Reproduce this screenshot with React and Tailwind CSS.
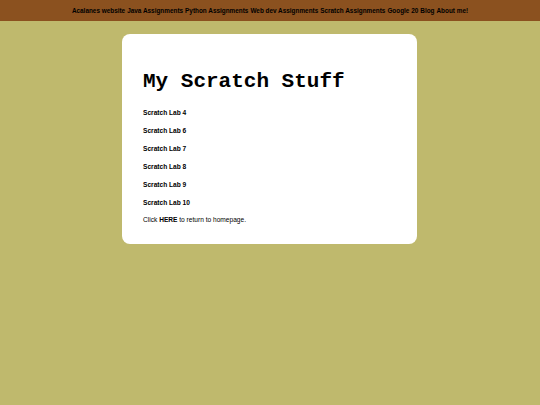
export default function App() {
  const labs = ["Scratch Lab 4", "Scratch Lab 6", "Scratch Lab 7", "Scratch Lab 8", "Scratch Lab 9", "Scratch Lab 10"];
  const nav = ["Acalanes website", "Java Assignments", "Python Assignments", "Web dev Assignments", "Scratch Assignments", "Google 20", "Blog", "About me!"];
  return (
    <div className="w-[540px] h-[405px] bg-[#bfb96d] font-['Liberation_Sans',Arial,sans-serif]">
      <div className="h-[21px] bg-[#8b511f] flex items-center justify-center gap-[2px] text-[6.4px] font-bold text-black">
        {nav.map((n) => (
          <span key={n}>{n}</span>
        ))}
      </div>
      <div className="ml-[122px] mt-[13px] w-[295px] h-[210px] bg-white rounded-[8px] pl-[21px] pt-[36px]">
        <h1 className="font-['Liberation_Mono','Courier_New',monospace] font-bold text-[21px] leading-[24px] text-black">My Scratch Stuff</h1>
        <div className="mt-[15px] flex flex-col gap-[10px]">
          {labs.map((l) => (
            <div key={l} className="text-[6.6px] leading-[8px] font-bold text-black">{l}</div>
          ))}
        </div>
        <div className="mt-[9px] text-[6.6px] leading-[8px] text-black">
          Click <span className="font-bold">HERE</span> to return to homepage.
        </div>
      </div>
    </div>
  );
}
